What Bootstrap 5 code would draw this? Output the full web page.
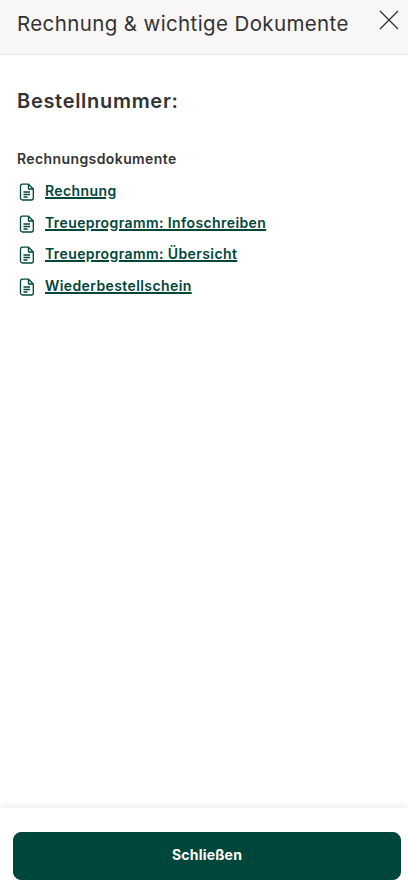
<!DOCTYPE html>
<html lang="de">
<head>
<meta charset="utf-8">
<meta name="viewport" content="width=device-width, initial-scale=1">
<link href="https://cdn.jsdelivr.net/npm/bootstrap@5.3.0/dist/css/bootstrap.min.css" rel="stylesheet">
<style>
html,body{height:100%;}
body{font-family:Inter,"Liberation Sans",sans-serif;color:#333;background:#fff;}
.sheet{height:889px;}
.sheet-head{height:55px;background:#f8f6f7;border-bottom:1px solid #e9e7e7;padding:0 4px 0 17px;}
.sheet-title{font-size:20.5px;font-weight:400;line-height:48px;margin:0;padding-bottom:6px;color:#333;letter-spacing:.38px;white-space:nowrap;}
.close-x{width:30px;height:40px;margin-bottom:14px;flex:none;}
.sheet-body{padding:33px 17px 0;}
.order-line{font-size:20px;font-weight:600;line-height:26px;margin:0 0 35px;color:#333;letter-spacing:.7px;}
.docs-head{font-size:14px;font-weight:600;line-height:20px;margin:0 0 12px;color:#333;letter-spacing:.4px;}
.doc-row{height:31.7px;gap:10px;padding-left:2px;}
.doc-row svg{flex:none;margin-top:2px;}
.doc-link{font-size:14px;font-weight:600;color:#00463b;line-height:20px;letter-spacing:.4px;text-decoration-thickness:1.5px;}
.sheet-foot{height:81px;padding:24px 7px 9px 13px;box-shadow:0 -3px 6px rgba(0,0,0,.06);}
.close-btn{height:48px;padding-bottom:10px;background:#00463b;border-color:#00463b;color:#fff;font-size:14px;font-weight:700;border-radius:8px;letter-spacing:.2px;}
</style>
</head>
<body>
<div class="sheet d-flex flex-column">
  <header class="sheet-head d-flex align-items-center justify-content-between flex-none">
    <h1 class="sheet-title">Rechnung &amp; wichtige Dokumente</h1>
    <button type="button" class="close-x btn p-0 border-0 d-flex align-items-center justify-content-center" aria-label="Schließen">
      <svg width="20" height="20" viewBox="0 0 20 20" fill="none" stroke="#333" stroke-width="1.3"><path d="M1 1l18 18M19 1L1 19"/></svg>
    </button>
  </header>
  <main class="sheet-body flex-grow-1">
    <h2 class="order-line">Bestellnummer:</h2>
    <h3 class="docs-head">Rechnungsdokumente</h3>
    <div class="d-flex flex-column">
      <div class="doc-row d-flex align-items-start">
        <svg width="16" height="18" viewBox="0 0 16 18" fill="none" stroke="#00463b" stroke-width="1.3" stroke-linejoin="round"><path d="M3 1.2h6.5L14.3 6v9a2 2 0 0 1-2 2H3.5a2 2 0 0 1-2-2V3a2 2 0 0 1 1.5-1.8z"/><path d="M9.5 1.2V6h4.8M4.5 9h6.5M4.5 11.5h6.5M4.5 14h4"/></svg>
        <a href="#" class="doc-link">Rechnung</a>
      </div>
      <div class="doc-row d-flex align-items-start">
        <svg width="16" height="18" viewBox="0 0 16 18" fill="none" stroke="#00463b" stroke-width="1.3" stroke-linejoin="round"><path d="M3 1.2h6.5L14.3 6v9a2 2 0 0 1-2 2H3.5a2 2 0 0 1-2-2V3a2 2 0 0 1 1.5-1.8z"/><path d="M9.5 1.2V6h4.8M4.5 9h6.5M4.5 11.5h6.5M4.5 14h4"/></svg>
        <a href="#" class="doc-link">Treueprogramm: Infoschreiben</a>
      </div>
      <div class="doc-row d-flex align-items-start">
        <svg width="16" height="18" viewBox="0 0 16 18" fill="none" stroke="#00463b" stroke-width="1.3" stroke-linejoin="round"><path d="M3 1.2h6.5L14.3 6v9a2 2 0 0 1-2 2H3.5a2 2 0 0 1-2-2V3a2 2 0 0 1 1.5-1.8z"/><path d="M9.5 1.2V6h4.8M4.5 9h6.5M4.5 11.5h6.5M4.5 14h4"/></svg>
        <a href="#" class="doc-link">Treueprogramm: Übersicht</a>
      </div>
      <div class="doc-row d-flex align-items-start">
        <svg width="16" height="18" viewBox="0 0 16 18" fill="none" stroke="#00463b" stroke-width="1.3" stroke-linejoin="round"><path d="M3 1.2h6.5L14.3 6v9a2 2 0 0 1-2 2H3.5a2 2 0 0 1-2-2V3a2 2 0 0 1 1.5-1.8z"/><path d="M9.5 1.2V6h4.8M4.5 9h6.5M4.5 11.5h6.5M4.5 14h4"/></svg>
        <a href="#" class="doc-link">Wiederbestellschein</a>
      </div>
    </div>
  </main>
  <footer class="sheet-foot">
    <button type="button" class="btn close-btn w-100">Schließen</button>
  </footer>
</div>
<script src="https://cdn.jsdelivr.net/npm/bootstrap@5.3.0/dist/js/bootstrap.bundle.min.js"></script>
</body>
</html>
